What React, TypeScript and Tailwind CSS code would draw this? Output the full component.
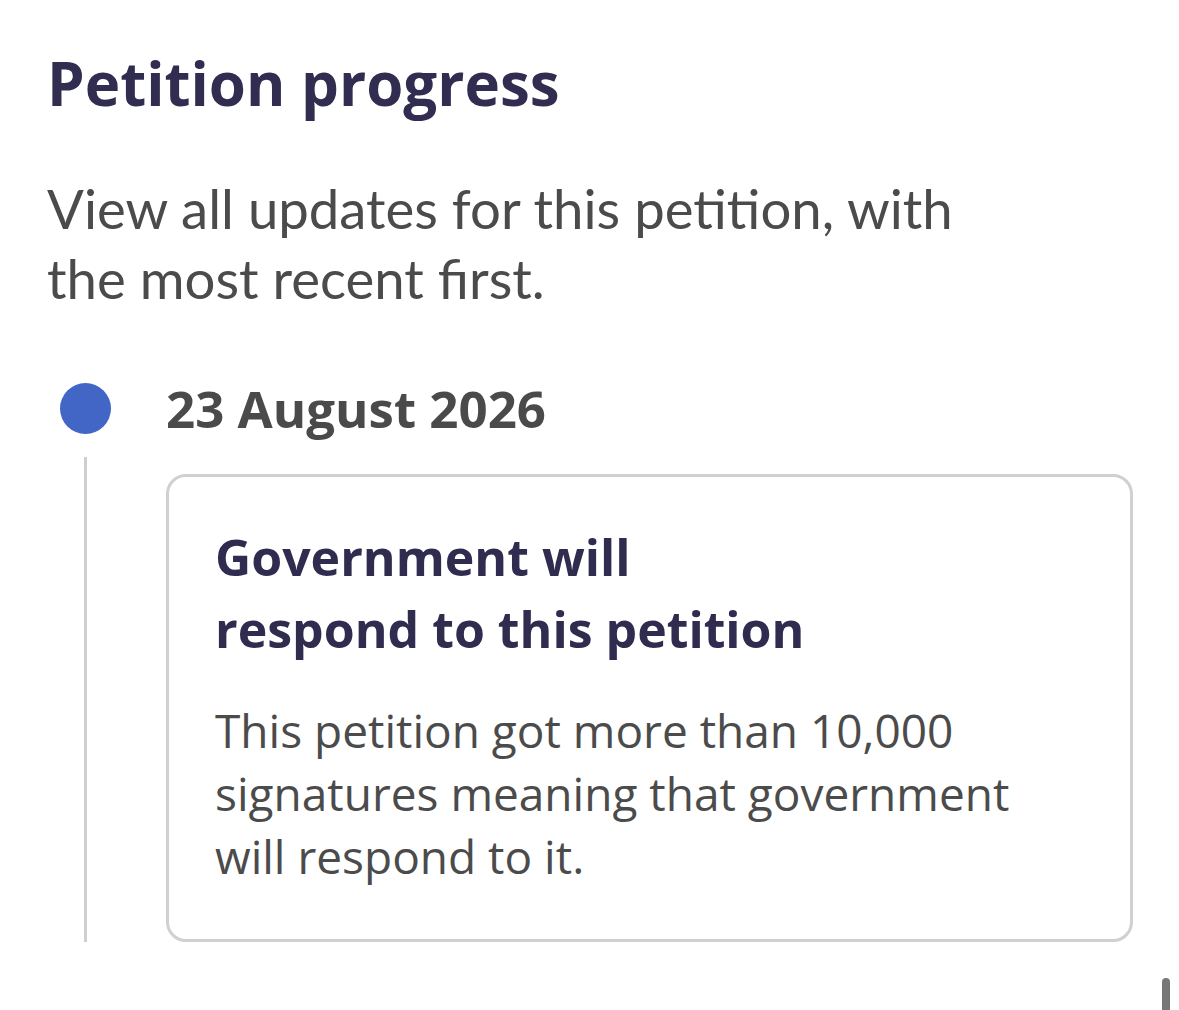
import React from 'react';

const heading = { fontFamily: '"Open Sans", Lato, sans-serif' };
const copy = { fontFamily: 'Lato, "Open Sans", sans-serif' };

const updates = [
  {
    date: '23 August 2026',
    title: ['Government will', 'respond to this petition'],
    body: 'This petition got more than 10,000 signatures meaning that government will respond to it.',
  },
];

export default function App() {
  return (
    <div className="relative min-h-[1010px] w-[1179px] bg-white" style={copy}>
      <div className="pl-[47px] pr-[40px] pt-[48px]">
        <h1 className="text-[60px] font-bold leading-[70px] text-[#312d50]" style={heading}>
          Petition progress
        </h1>

        <p className="mt-[55px] w-[960px] text-[54.5px] leading-[70px] text-[#4b4b4b]">
          View all updates for this petition, with the most recent first.
        </p>

        <div className="mt-[61px]">
          {updates.map((u) => (
            <div key={u.date} className="grid grid-cols-[119px_967px]">
              {/* marker */}
              <div className="flex h-[68px] items-center pl-[13px]">
                <span className="block h-[51px] w-[51px] rounded-full bg-[#4266c5]" />
              </div>
              <div className="flex h-[68px] items-center text-[51px] font-bold text-[#4a4a4a]" style={heading}>
                {u.date}
              </div>

              {/* timeline rail */}
              <div className="pl-[37px] pt-[15px]">
                <div className="h-full w-[3px] bg-[#cfcfcf]" />
              </div>
              <div className="mt-[32px] rounded-[20px] border-[3px] border-[#d0d0d0] px-[46px] pb-[51px] pt-[44px]">
                <h2 className="text-[50px] font-bold leading-[72px] text-[#2f2c4f]" style={heading}>
                  {u.title[0]}
                  <br />
                  {u.title[1]}
                </h2>
                <p className="mt-[34px] w-[850px] text-[46px] leading-[63px] text-[#4b4b4b]" style={heading}>
                  {u.body}
                </p>
              </div>
            </div>
          ))}
        </div>
      </div>

      {/* scroll indicator */}
      <div className="absolute bottom-0 right-[9px] h-[32px] w-[8px] rounded-t-full bg-[#777]" />
    </div>
  );
}
